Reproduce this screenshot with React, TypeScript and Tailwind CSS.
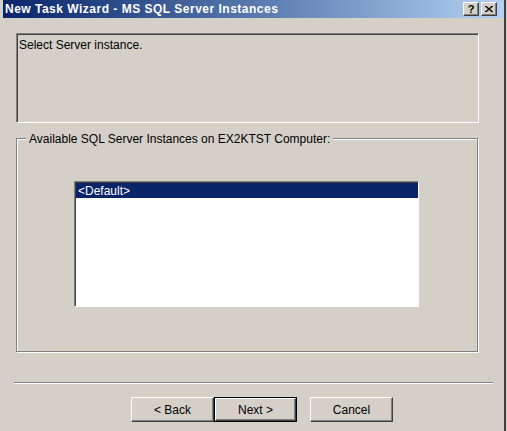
import React from "react";

const font = { fontFamily: '"Liberation Sans", Arial, sans-serif' };

function DlgButton({ label, isDefault }: { label: string; isDefault?: boolean }) {
  return (
    <button
      type="button"
      className={`h-[25px] w-[83px] text-[12px] text-black ${isDefault ? "border border-black" : ""}`}
    >
      <span className="flex h-full w-full items-center justify-center border border-t-white border-l-white border-r-[#404040] border-b-[#404040] bg-[#d4d0c8] shadow-[inset_-1px_-1px_0_#808080]">
        {label}
      </span>
    </button>
  );
}

function TitleButton({ children }: { children: React.ReactNode }) {
  return (
    <span className="flex h-[14px] w-[16px] items-center justify-center border border-t-white border-l-white border-r-[#404040] border-b-[#404040] bg-[#d4d0c8] text-[11px] font-bold leading-none text-black shadow-[inset_-1px_-1px_0_#808080]">
      {children}
    </span>
  );
}

export default function App() {
  return (
    <div className="h-[431px] w-[507px] overflow-hidden bg-[#d4d0c8] pl-[3px] pr-[1px]" style={font}>
      <div className="flex h-full flex-col border-r-2 border-r-[#404040]">
        {/* title bar */}
        <div className="flex h-[18px] shrink-0 items-center bg-gradient-to-r from-[#0a246a] to-[#b4d2f2] pl-[2px] pr-[7px]">
          <span className="flex-1 text-[12px] font-bold tracking-[0.5px] text-white">
            New Task Wizard - MS SQL Server Instances
          </span>
          <div className="flex gap-[2px]">
            <TitleButton>?</TitleButton>
            <TitleButton>
              <svg width="8" height="7" viewBox="0 0 8 7">
                <path d="M0 0L7 6M1 0L8 6M7 0L0 6M8 0L1 6" stroke="#000" strokeWidth="1" />
              </svg>
            </TitleButton>
          </div>
        </div>

        {/* header panel */}
        <div className="ml-[13px] mt-[15px] h-[90px] w-[463px] border border-t-[#808080] border-l-[#808080] border-r-white border-b-white shadow-[inset_1px_1px_0_#404040]">
          <p className="pl-[2px] pt-[2px] text-[12px] text-black">Select Server instance.</p>
        </div>

        {/* group box */}
        <div className="relative ml-[13px] mt-[15px] h-[214px] w-[462px] border border-[#808080] shadow-[1px_1px_0_#fff,inset_1px_1px_0_#fff]">
          <span className="absolute left-[9px] top-[-9px] bg-[#d4d0c8] px-[3px] text-[12px] text-black">
            Available SQL Server Instances on EX2KTST Computer:
          </span>
          <div className="ml-[57px] mt-[42px] h-[126px] w-[345px] border border-t-[#808080] border-l-[#808080] border-r-white border-b-white bg-white shadow-[inset_1px_1px_0_#404040]">
            <div className="ml-[1px] mt-[1px] flex h-[15px] items-center bg-[#0a246a] pl-[2px] text-[12px] text-white">
              &lt;Default&gt;
            </div>
          </div>
        </div>

        {/* separator */}
        <div className="ml-[11px] mt-[30px] h-[2px] w-[479px] border-t border-t-[#808080] border-b border-b-white" />

        {/* buttons */}
        <div className="ml-[128px] mt-[13px] flex">
          <DlgButton label="< Back" />
          <DlgButton label="Next >" isDefault />
          <div className="w-[13px]" />
          <DlgButton label="Cancel" />
        </div>
      </div>
    </div>
  );
}
